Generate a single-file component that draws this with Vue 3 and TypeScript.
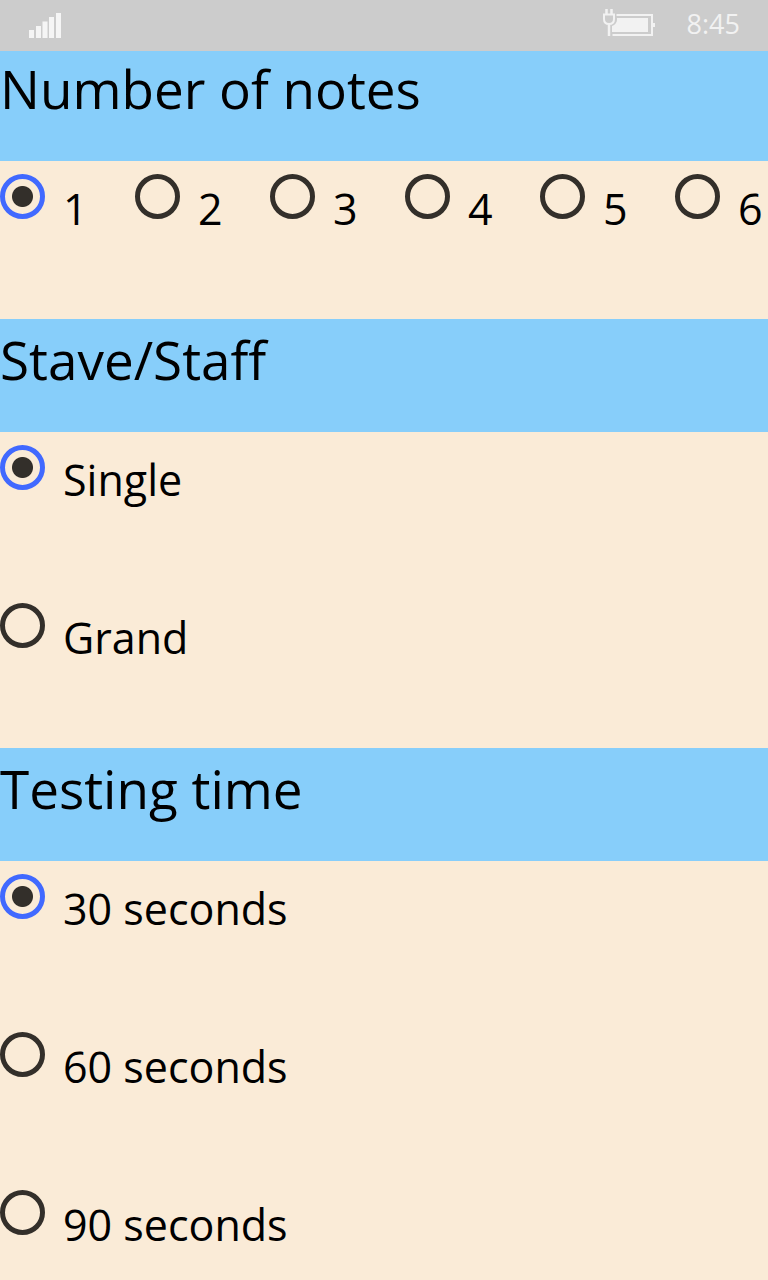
<script setup lang="ts">
import { reactive } from 'vue'

interface Option {
  value: string
  label: string
}

interface Group {
  id: string
  title: string
  inline: boolean
  options: Option[]
}

const groups: Group[] = [
  {
    id: 'notes',
    title: 'Number of notes',
    inline: true,
    options: ['1', '2', '3', '4', '5', '6'].map((n) => ({ value: n, label: n })),
  },
  {
    id: 'staff',
    title: 'Stave/Staff',
    inline: false,
    options: [
      { value: 'single', label: 'Single' },
      { value: 'grand', label: 'Grand' },
    ],
  },
  {
    id: 'time',
    title: 'Testing time',
    inline: false,
    options: [
      { value: '30', label: '30 seconds' },
      { value: '60', label: '60 seconds' },
      { value: '90', label: '90 seconds' },
    ],
  },
]

const selected = reactive<Record<string, string>>({
  notes: '1',
  staff: 'single',
  time: '30',
})
</script>

<template>
  <div class="screen">
    <header class="status">
      <svg class="signal" width="34" height="28" viewBox="0 0 34 28" aria-hidden="true">
        <g fill="#f5f5f5">
          <rect x="1" y="18" width="5" height="8" />
          <rect x="8" y="14" width="5" height="12" />
          <rect x="14.500" y="9.500" width="5" height="16.500" />
          <rect x="21" y="5" width="5" height="21" />
          <rect x="28" y="1" width="5" height="25" />
        </g>
      </svg>
      <svg class="battery" width="54" height="30" viewBox="0 0 54 30" aria-hidden="true">
        <g fill="none" stroke="#f2f2f2" stroke-width="2">
          <path d="M15.500 7H51V27H11.500" />
          <path d="M5.500 1V6M10.500 1V6" stroke-width="2.500" />
          <path d="M3 6.500H13V11C13 14 11 16 8 16S3 14 3 11Z" />
          <path d="M8 16V28" stroke-width="2.500" />
        </g>
        <path d="M16 10H47V24H11V18C14 17 16 14.500 16 12Z" fill="#f2f2f2" />
        <rect x="52" y="15" width="2" height="4" fill="#f2f2f2" />
      </svg>
      <time class="clock">8:45</time>
    </header>

    <main class="settings">
      <section v-for="group in groups" :key="group.id" :aria-labelledby="group.id + '-title'">
        <h2 :id="group.id + '-title'" class="title">{{ group.title }}</h2>
        <div class="options" :class="{ inline: group.inline }" role="radiogroup" :aria-labelledby="group.id + '-title'">
          <label v-for="option in group.options" :key="option.value" class="option">
            <input v-model="selected[group.id]" class="radio" type="radio" :name="group.id" :value="option.value" />
            <span class="text">{{ option.label }}</span>
          </label>
        </div>
      </section>
    </main>
  </div>
</template>

<style>
body {
  margin: 0;
  background: #faebd7;
}
</style>

<style scoped>
.screen {
  display: flex;
  flex-direction: column;
  height: 100vh;
  overflow: hidden;
  background: #faebd7;
  color: #000;
  font-family: "Open Sans", "Noto Sans", sans-serif;
}

.status {
  display: flex;
  align-items: center;
  flex: none;
  box-sizing: border-box;
  height: 51px;
  padding: 0 28px;
  background: #ccc;
  color: #f2f2f2;
}

.battery {
  margin-left: auto;
  margin-right: 32px;
  margin-bottom: 5px;
}

.clock {
  padding-bottom: 4px;
  font-size: 27px;
  line-height: 48px;
}

.settings {
  flex: 1;
  min-height: 0;
  overflow: hidden;
}

.title {
  box-sizing: border-box;
  min-height: 113px;
  margin: 0;
  padding-top: 4px;
  background: #87cefa;
  font-size: 53px;
  font-weight: 400;
  line-height: 74px;
}

section:first-child .title {
  min-height: 110px;
  padding-top: 1px;
}

.options {
  display: flex;
  flex-direction: column;
}

.options.inline {
  flex-direction: row;
}

.option {
  display: flex;
  align-items: flex-start;
  gap: 18px;
  box-sizing: border-box;
  height: 158px;
  padding-top: 13px;
}

.inline .option {
  flex: none;
  width: 135px;
}

.radio {
  appearance: none;
  flex: none;
  box-sizing: border-box;
  width: 45px;
  height: 45px;
  margin: 0;
  border: 5px solid #332f2a;
  border-radius: 50%;
}

.radio:checked {
  border-color: #4169ff;
  background: radial-gradient(circle, #332f2a 10px, transparent 11px);
}

.text {
  padding-top: 6px;
  font-size: 43px;
  line-height: 58px;
  white-space: nowrap;
}
</style>
